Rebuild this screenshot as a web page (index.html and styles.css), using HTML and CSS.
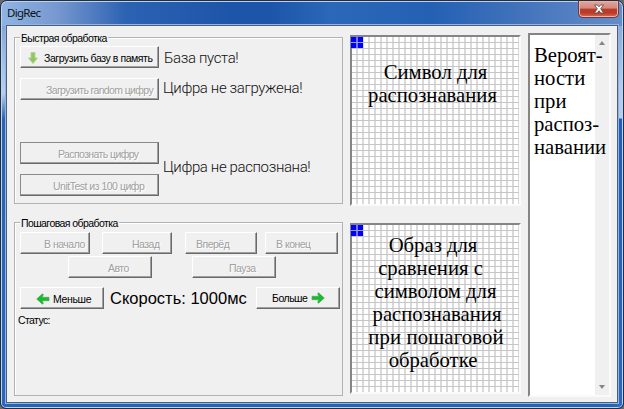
FILE: index.html
```
<!DOCTYPE html>
<html lang="ru">
<head>
<meta charset="utf-8">
<title>DigRec</title>
<link rel="stylesheet" href="styles.css">
</head>
<body>
<div class="window">
  <header class="titlebar">
    <span class="title">DigRec</span>
    <button class="close" aria-label="Закрыть"><svg width="12" height="10" viewBox="0 0 12 10"><path d="M1.5 1h3L6 2.8 7.500 1h3L7.700 4.800 10.700 9h-3L6 6.700 4.300 9h-3l3-4.200z" fill="#fff" stroke="#54423f" stroke-width=".8"/></svg></button>
  </header>
  <main class="client">
    <div class="left">
      <section class="group quick">
        <h2 class="legend"><span>Быстрая обработка</span></h2>
        <div class="line"><button class="btn wide"><svg class="down" width="10" height="12" viewBox="0 0 10 12"><path d="M3 .5h4V6h2.500L5 11.500.5 6H3z" fill="#8fc95c" stroke="#b0cf96" stroke-width=".8"/></svg><span class="t-load">Загрузить базу в память</span></button><span class="msg m-base">База пуста!</span></div>
        <div class="line"><button class="btn wide off"><span class="t-random">Загрузить random цифру</span></button><span class="msg m-loaded">Цифра не загружена!</span></div>
        <div class="line pair">
          <div class="stack"><button class="btn wide off framed"><span class="t-recog">Распознать цифру</span></button><button class="btn wide off framed"><span class="t-unit">UnitTest из 100 цифр</span></button></div>
          <span class="msg m-recog">Цифра не распознана!</span>
        </div>
      </section>
      <section class="group steps">
        <h2 class="legend"><span>Пошаговая обработка</span></h2>
        <div class="nav"><button class="btn off b-start"><span>В начало</span></button><button class="btn off b-back"><span>Назад</span></button><button class="btn off b-fwd"><span>Вперёд</span></button><button class="btn off b-end"><span>В конец</span></button></div>
        <div class="auto"><button class="btn off b-auto"><span>Авто</span></button><button class="btn off b-pause"><span>Пауза</span></button></div>
        <div class="speed">
          <button class="btn b-less"><svg width="14" height="12" viewBox="0 0 14 12"><path d="M.7 6L6.500.8 7.300 1.600 6.300 4.300H13v3.400H6.300L7.300 10.400 6.500 11.200z" fill="#14bd2b" stroke="#55a55b" stroke-width=".7"/></svg><span>Меньше</span></button>
          <span class="rate">Скорость: 1000мс</span>
          <button class="btn b-more"><span>Больше</span><svg width="14" height="12" viewBox="0 0 14 12"><path d="M13.300 6L7.500.8 6.700 1.600 7.700 4.300H1v3.400H7.700L6.700 10.400 7.500 11.200z" fill="#14bd2b" stroke="#55a55b" stroke-width=".7"/></svg></button>
        </div>
        <p class="status">Статус:</p>
      </section>
    </div>
    <div class="boards">
      <div class="board"><i class="cursor"></i><p class="note n-symbol"><span class="s0">Символ для</span><span>распознавания</span></p></div>
      <div class="board"><i class="cursor"></i><p class="note n-image"><span class="s1">Образ для</span><span class="s2">сравнения с</span><span>символом для</span><span class="s3">распознавания</span><span class="s4">при пошаговой</span><span class="s1">обработке</span></p></div>
    </div>
    <div class="list">
      <div class="scroll"><i class="up"></i><i class="dn"></i></div>
      <p class="note n-list"><span>Вероят-</span><span>ности</span><span>при</span><span>распоз-</span><span>навании</span></p>
    </div>
  </main>
</div>
</body>
</html>
```
FILE: styles.css
```
* { box-sizing: border-box; }
html, body { margin: 0; background: #686868; }
body { width: 624px; height: 409px; overflow: hidden; font-family: "Liberation Sans", Arial, sans-serif; font-size: 10.5px; color: #000; }
button, h2, p { font: inherit; margin: 0; }
.window {
  width: 624px; height: 409px; padding: 0 5px 5px;
  border: 1px solid #242c40; border-radius: 7px 7px 6px 6px;
  background:
    linear-gradient(90deg, #8fb4e4, #7899d0 55px, #2c62b2 125px, #1d55aa 230px, #1d55aa 270px, #2b68b9 330px, #2460b4 430px, #4273bb 520px, #668dc9) 0 0 / 100% 25px no-repeat,
    linear-gradient(#789dd5, #b2cbed 85px, #b5cdef 117px, #1f5fb8 118px, #2b68be) 100% 0 / 8px 100% no-repeat,
    linear-gradient(#7095d0, #a9c5ea 70px, #b8d0ee 92px, #2863b7 118px, #2965bb) 0 0 / 8px 100% no-repeat,
    #2463b8;
  box-shadow: inset 0 0 0 1px #b9d4f3;
}
.titlebar { height: 24px; display: flex; justify-content: space-between; align-items: flex-start; }
.title { font: 11.5px/15px "Noto Sans", "Open Sans", sans-serif; letter-spacing: -.7px; padding: 4px 0 0 1px; color: #111; }
.close {
  width: 41px; height: 17px; margin-right: -1px; padding: 0 0 1px;
  display: flex; align-items: center; justify-content: center;
  border: 1px solid #6b3a43; border-top: 0; border-radius: 0 0 5px 5px;
  background: linear-gradient(#e2a79d, #d4887d 45%, #b73c2c 50%, #bd3b28 75%, #d76f5a);
  box-shadow: inset 0 0 0 1px #ebb4aa;
}
.client {
  height: 378px; display: flex; align-items: flex-start;
  padding: 7px 0 0 7px; background: #f0f0f0;
  border: 1px solid #4d5e7a; box-shadow: 0 0 0 1px #91b4e0;
}
.left { width: 329px; padding-top: 4px; margin-right: 7px; }
.group { border: 1px solid #b2b2b2; box-shadow: inset 1px 1px #fff; }
.quick { height: 167px; }
.steps { height: 174px; margin-top: 18px; }
.legend { height: 8px; padding-left: 5px; line-height: 12px; }
.legend span { display: inline-block; height: 12px; padding: 0 1px; margin-top: -6px; vertical-align: top; background: #f0f0f0; letter-spacing: -.57px; }
.btn {
  height: 22px; padding: 1px 0 0; display: flex; align-items: center; flex: none;
  background: #f0f0f0; color: #000; letter-spacing: -.5px; white-space: nowrap;
  border: 1px solid; border-color: #fff #696969 #696969 #fff;
  box-shadow: inset -1px -1px #a0a0a0;
}
.off { color: #a0a0a0; text-shadow: 1px 1px #fff; }
.framed { border-color: #8a8a8a #696969 #696969 #8a8a8a; }
.wide { width: 139px; }
.line { display: flex; align-items: center; padding-left: 5px; margin-bottom: 10px; }
.pair { padding-top: 32px; }
.stack { display: flex; flex-direction: column; gap: 10px; }
.down { margin: 0 6px 0 7px; }
.t-load { letter-spacing: -.43px; }
.t-random { margin-left: 25px; letter-spacing: -.63px; }
.t-recog { margin-left: 37px; letter-spacing: -.6px; }
.t-unit { margin-left: 32px; }
.msg { font: 300 15px/18px Roboto, sans-serif; letter-spacing: -.37px; color: #111; margin-left: 4px; white-space: nowrap; }
.m-base { margin: 1px 0 0 5px; }
.m-loaded { margin-top: -2px; }
.m-recog { margin-top: -5px; }
.nav { display: flex; margin: 1px 0 0 5px; }
.b-start { width: 70px; padding-left: 23px; margin-right: 12px; }
.b-back { width: 70px; padding-left: 29px; margin-right: 13px; }
.b-fwd { width: 72px; padding-left: 10px; margin-right: 8px; }
.b-end { width: 73px; padding-left: 10px; }
.auto { display: flex; margin: 2px 0 0 53px; }
.b-auto { width: 84px; padding-left: 39px; margin-right: 40px; }
.b-pause { width: 84px; padding-left: 36px; }
.speed { display: flex; align-items: center; margin: 9px 0 0 5px; }
.b-less { width: 84px; padding-left: 15px; gap: 3px; letter-spacing: -.35px; }
.b-more { width: 84px; padding-left: 15px; gap: 4px; margin-top: -1px; letter-spacing: -.5px; }
.rate { width: 152px; padding-left: 6px; font-size: 16.5px; line-height: 20px; white-space: nowrap; }
.status { margin: 5px 0 0 3px; line-height: 13px; letter-spacing: -.6px; }
.boards { display: flex; flex-direction: column; gap: 17px; padding-top: 2px; margin-right: 7px; }
.board {
  position: relative; width: 171px; height: 171px;
  border: 2px solid; border-color: #858585 #fafafa #fafafa #858585;
  background:
    repeating-linear-gradient(180deg, transparent 0 5px, #c6c6c6 5px 6px),
    repeating-linear-gradient(90deg, transparent 0 4px, #dadada 4px 6px),
    #fff;
}
.cursor { position: absolute; left: -1px; top: 0; width: 12px; height: 11px;
  background: linear-gradient(#9b9bff, #9b9bff) 0 5px / 100% 1px no-repeat, linear-gradient(90deg, #00f 5px, #7777ee 5px 7px, #00f 7px); }
.note { font: 20.7px/23px "Liberation Serif", "Times New Roman", serif; white-space: nowrap; }
.note span { display: block; }
.n-symbol { text-align: center; padding: 24px 6px 0 0; }
.n-image { text-align: center; padding-top: 9px; }
.s0 { padding-left: 6px; }
.s1 { padding-right: 5px; }
.s2 { padding-right: 10px; }
.s3 { padding-left: 3px; }
.s4 { letter-spacing: .15px; padding-left: 1px; }
.list { display: flex; flex-direction: row-reverse; width: 83px; height: 364px; background: #fff; border: 2px solid; border-color: #858585 #fafafa #fafafa #858585; }
.scroll { width: 14px; flex: none; background: #f0f0f0; display: flex; flex-direction: column; justify-content: space-between; align-items: center; padding: 6px 0; }
.up, .dn { width: 0; height: 0; border: 3px solid transparent; border-top: 0; border-bottom: 4px solid #858585; }
.dn { border-bottom: 0; border-top: 4px solid #858585; }
.n-list { width: 65px; flex: none; padding: 9px 0 0 4px; position: relative; }
```
